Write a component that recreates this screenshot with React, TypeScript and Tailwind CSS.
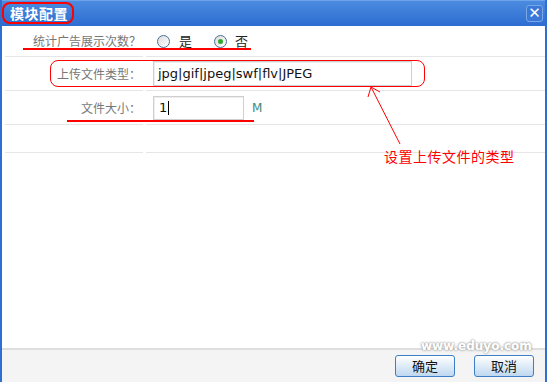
import React from "react";

const cn = "font-['Noto_Sans_CJK_SC','Noto_Sans',sans-serif]";

function Radio({ checked }: { checked?: boolean }) {
  return (
    <span className="w-[13px] h-[13px] rounded-full border border-[#4a6f98] bg-gradient-to-br from-[#dcdcdc] to-white flex items-center justify-center">
      {checked && <span className="w-[5px] h-[5px] rounded-full bg-[#2fa82f]" />}
    </span>
  );
}

function Row({ label, children, h }: { label: string; children?: React.ReactNode; h: string }) {
  return (
    <div className={`flex gap-[3px] pl-[3px] ${h}`}>
      <div className="w-[138px] border-b border-[#e6e6e6] flex items-center justify-end pr-[2px] text-[12px] text-[#777]">
        {label}
      </div>
      <div className="flex-1 border-b border-[#e6e6e6] flex items-center pl-[7px] text-[12px] text-[#333]">
        {children}
      </div>
    </div>
  );
}

export default function App() {
  return (
    <div className={`relative w-[549px] h-[382px] bg-white overflow-hidden ${cn}`}>
      <div className="w-[547px] h-[382px] flex flex-col border-x-2 border-[#2f6fd0] bg-white">
        {/* Title bar */}
        <div className="h-[26px] shrink-0 flex items-center justify-between pl-[8px] pr-[2px] bg-gradient-to-b from-[#4b8be0] to-[#2c6dd0] border-t border-[#6fa3ea]">
          <span className="text-[14px] font-bold text-white tracking-[0.5px]">模块配置</span>
          <span className="w-[17px] h-[17px] rounded-[3px] border border-[#7aa7e8] bg-[#3a78d8] flex items-center justify-center text-white text-[15px] font-bold leading-none font-['DejaVu_Sans',sans-serif]">
            ✕
          </span>
        </div>

        {/* Form */}
        <div className="flex-1 flex flex-col">
          <Row label="统计广告展示次数？" h="h-[31px]">
            <label className="flex items-center gap-[9px] ml-[4px]">
              <Radio />
              <span className="text-[13px] text-[#222]">是</span>
            </label>
            <label className="flex items-center gap-[8px] ml-[22px]">
              <Radio checked />
              <span className="text-[13px] text-[#222]">否</span>
            </label>
          </Row>
          <Row label="上传文件类型：" h="h-[34px]">
            <div className="w-[259px] h-[25px] border border-[#cfcfcf] bg-white flex items-center px-[4px] text-[13px] text-[#111] font-['DejaVu_Sans',sans-serif] shadow-[inset_1px_1px_0_#eee]">
              jpg|gif|jpeg|swf|flv|JPEG
            </div>
          </Row>
          <Row label="文件大小：" h="h-[34px]">
            <div className="w-[91px] h-[24px] border border-[#cfcfcf] bg-white flex items-center px-[5px] text-[13px] text-[#111] font-['DejaVu_Sans',sans-serif] shadow-[inset_1px_1px_0_#eee]">
              1<span className="w-[1px] h-[14px] bg-black ml-[1px]" />
            </div>
            <span className="ml-[8px] text-[12px] text-[#3d8a7c] font-['DejaVu_Sans',sans-serif]">M</span>
          </Row>
          <Row label="" h="h-[28px]" />
          <div className="flex-1" />
        </div>

        {/* Footer */}
        <div className="h-[34px] shrink-0 bg-[#f4f4f4] border-t-2 border-[#dedede] flex items-center justify-end gap-[19px] pr-[11px]">
          <button className="w-[60px] h-[22px] rounded-[3px] border border-[#3d7fc6] bg-gradient-to-b from-white to-[#bfd8f0] text-[13px] text-[#111]">
            确定
          </button>
          <button className="w-[60px] h-[22px] rounded-[3px] border border-[#3d7fc6] bg-gradient-to-b from-white to-[#bfd8f0] text-[13px] text-[#111]">
            取消
          </button>
        </div>
      </div>

      {/* Annotations */}
      <div className="absolute left-[2px] top-[2px] w-[72px] h-[22px] rounded-[8px] border-2 border-[#ff0000]" />
      <div className="absolute left-[23px] top-[48px] w-[228px] h-[2px] bg-[#ff0000]" />
      <div className="absolute left-[50px] top-[60px] w-[375px] h-[27px] rounded-[8px] border border-[#ff0000]" />
      <div className="absolute left-[67px] top-[120px] w-[187px] h-[2px] bg-[#ff0000]" />
      <svg className="absolute left-0 top-0" width="549" height="382">
        <line x1="400" y1="144" x2="371" y2="87" stroke="#ff0000" strokeWidth="1" />
        <polyline points="368,97 371,87 380,92" fill="none" stroke="#ff0000" strokeWidth="1" />
      </svg>
      <div className="absolute left-[384px] top-[146px] text-[14px] text-[#ff0000] tracking-[0.5px]">设置上传文件的类型</div>

      {/* Watermark */}
      <div className="absolute left-[421px] top-[337px] text-[12px] text-white font-bold font-['DejaVu_Sans',sans-serif] [text-shadow:0_0_2px_#999,0_0_3px_#aaa]">
        www.eduyo.com
      </div>
    </div>
  );
}
